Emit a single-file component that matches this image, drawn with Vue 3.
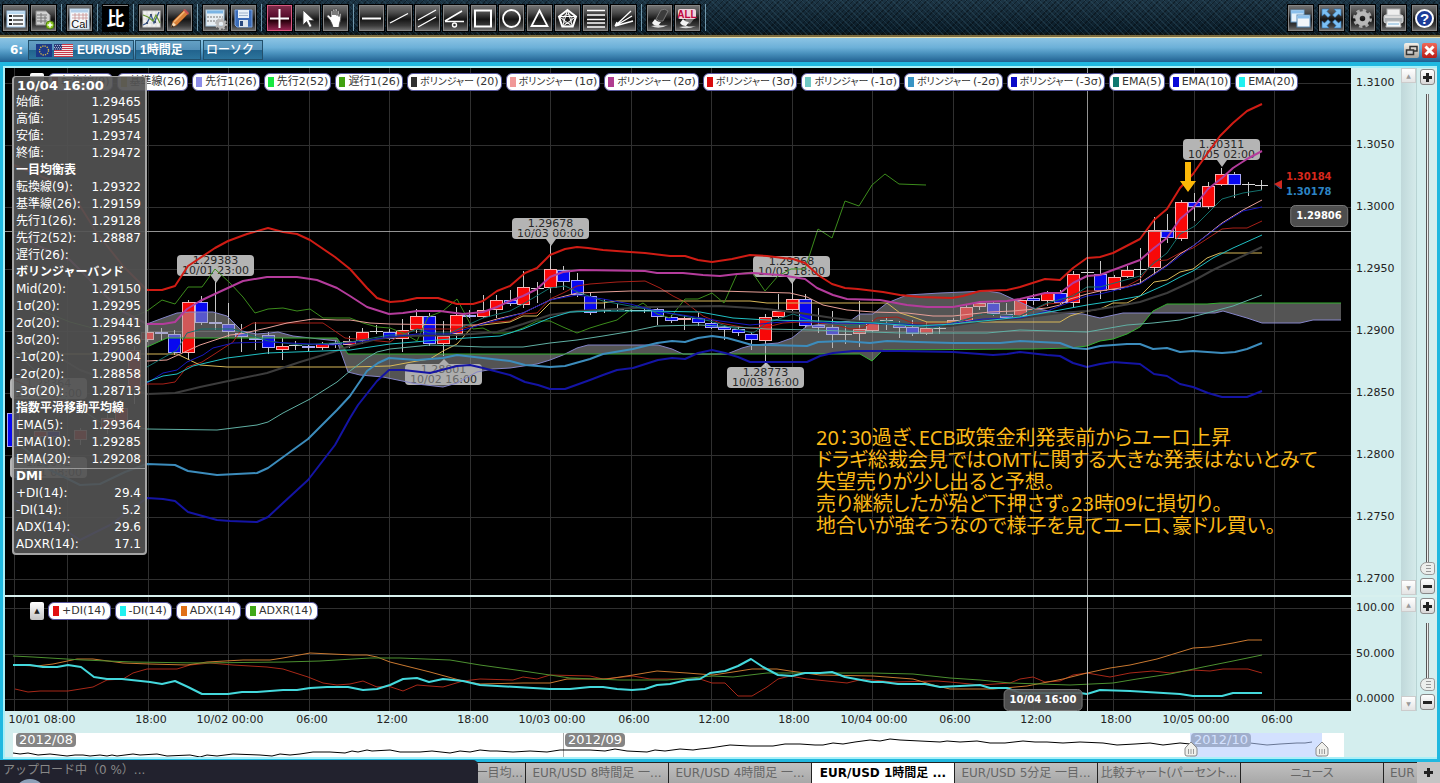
<script setup>
const PLOT = { x: 5, y: 68, w: 1346, h: 527 }
const SUB = { x: 5, y: 597, w: 1346, h: 114 }
const NAV = { x: 13, y: 733, w: 1331, h: 24 }

const pct = (v, start, size) => ((v - start) / size) * 100 + '%'
const at = (box, x, y) => ({ left: pct(x, box.x, box.w), top: pct(y, box.y, box.h) })

const ink = '#fff'
const toolGroups = [
  [
    { name: 'チャート一覧', art: '<rect x="5" y="6" width="18" height="16" fill="#f4f8fb" stroke="#9cc4e8"/><path d="M7 11h3M7 15h3M7 19h3" stroke="#222" stroke-width="2"/><path d="M11 11h10M11 15h10M11 19h10" stroke="#444" stroke-width="1.600"/><path d="M5 8h18" stroke="#b8d8f0" stroke-width="2"/>' },
    { name: 'チャート追加', art: '<path d="M6 6h10l4 4v10H6z" fill="#d0d0d0" stroke="#888"/><path d="M7 10h10M7 13h10M7 16h10M11 8v10M15 11v8" stroke="#777"/><circle cx="20" cy="20" r="4" fill="#8fc820" stroke="#4e8010"/><path d="M20 17.500v5M17.500 20h5" stroke="#fff" stroke-width="1.500"/>' }
  ],
  [{ name: 'カレンダー', art: '<rect x="4" y="4" width="19" height="20" fill="#f6f8fa" stroke="#b8d4ea"/><path d="M5 6h17" stroke="#b4d0ea" stroke-width="3"/><path d="M6 10h16M6 13h16M9 8v7M13 8v7M17 8v7M20 8v7" stroke="#c89090" stroke-width=".8"/><text x="13.500" y="23" text-anchor="middle" font-family="Liberation Sans, sans-serif" font-size="11" fill="#111">Cal</text>' }],
  [{ name: '比較', kind: 'compare', art: '<rect x="1" y="1" width="25" height="25" fill="#000"/><text x="13.500" y="20" text-anchor="middle" font-family="Noto Sans CJK JP, sans-serif" font-size="18" font-weight="700" fill="#fff">比</text>' }],
  [
    { name: 'テクニカル', art: '<rect x="5" y="6" width="17" height="16" fill="#f2f2f0" stroke="#d8d8d8"/><path d="M5 10h17M5 14h17M5 18h17M9 6v16M14 6v16M18 6v16" stroke="#ccc" stroke-width=".6"/><path d="M5 20l4-2 4-8 3 8 5-11" stroke="#385890" fill="none" stroke-width="1.300"/><path d="M5 10l5 2 5 4 3-6 4 8" stroke="#6a9a30" fill="none" stroke-width="1.200"/><path d="M8 17h2v2H8zM12 9h2v2h-2zM16 16h2v2h-2z" fill="#405070"/>' },
    { name: '描画', art: '<path d="M5 23l2-7L18 5l4 4L11 20z" fill="#d88038" stroke="#7a4018" stroke-width=".8"/><path d="M8 17L19 6" stroke="#f4b878" stroke-width="1.500"/><path d="M17 5l2-1 4 4-1 2z" fill="#c85050"/><path d="M5 23l2-6 3 3z" fill="#f4dcb8"/><path d="M5 23l1-3 2 2z" fill="#222"/>' }
  ],
  [
    { name: '表示設定', art: '<rect x="4" y="5" width="18" height="16" fill="#e8eef2" stroke="#a8c8e0"/><path d="M5 7h16" stroke="#7ab4e4" stroke-width="3"/><path d="M5 12h16M5 16h16" stroke="#777" stroke-width="1" stroke-dasharray="2 1"/><circle cx="19" cy="19" r="3.500" fill="none" stroke="#b8b8b8" stroke-width="2.500"/><circle cx="19" cy="19" r="5" fill="none" stroke="#b8b8b8" stroke-width="2" stroke-dasharray="2 1.900"/>' },
    { name: '保存', art: '<path d="M5 5h17v17H7l-2-2z" fill="#3c6cb8" stroke="#78a0dc"/><rect x="8" y="5" width="11" height="8" fill="#e8f0f8"/><path d="M9 8h9M9 10.500h9" stroke="#a0b4cc"/><rect x="9" y="15" width="9" height="7" fill="#dce4ee"/><rect x="10" y="16" width="3" height="5" fill="#284880"/>' }
  ],
  [
    { name: '十字線', kind: 'active', art: '<path d="M13.500 4v19M4 13.500h19" stroke="#fff" stroke-width="2"/>' },
    { name: '選択', art: '<path d="M9 5v15l3.500-3.500 3 6 2.500-1.200-3-5.800h5z" fill="#fff" stroke="#444" stroke-width=".8"/>' },
    { name: '移動', art: '<path d="M8 15L5 11.500q-.5-2 1.500-1.500L9 12V6q1-1.600 2 0v4V4.500q1-1.500 2 0V10 4q1-1.500 2 0v6.500V6q1.100-1.500 2 0v5.500V9q1.500-1.200 2 .5 0 6-1.500 9l-.5 4H11q-.5-3-3-7.500z" fill="#fff" stroke="#444" stroke-width=".9"/>' }
  ],
  [
    { name: '水平線', art: `<path d="M4 13.500h19" stroke="${ink}" stroke-width="2"/>` },
    { name: 'トレンドライン', art: `<path d="M4 18L22 8.500" stroke="${ink}" stroke-width="1.400"/>` },
    { name: '平行線', art: `<path d="M4 15L22 5M4 22l18-10" stroke="${ink}" stroke-width="1.400"/>` },
    { name: '角度線', art: `<path d="M3 16L20 6M3 16.500h19" stroke="${ink}" stroke-width="1.600"/><circle cx="12.500" cy="20" r="2" fill="none" stroke="${ink}" stroke-width="1.400"/>` },
    { name: '四角形', art: `<rect x="5" y="5.500" width="16" height="16" fill="none" stroke="${ink}" stroke-width="2"/>` },
    { name: '円', art: `<circle cx="13.500" cy="13.500" r="8.500" fill="none" stroke="${ink}" stroke-width="1.800"/>` },
    { name: '三角形', art: `<path d="M13.500 5.500L21.500 21h-16z" fill="none" stroke="${ink}" stroke-width="1.800"/>` },
    { name: '五角形', art: `<path d="M13.500 5l8.500 6.500-3.300 10H8.300L5 11.500z" fill="none" stroke="${ink}" stroke-width="2"/><path d="M13.500 5L8.500 21.500 22 11.500H5l13.500 10z" fill="none" stroke="${ink}" stroke-width="1"/><circle cx="13.500" cy="14" r="4.500" fill="none" stroke="${ink}" stroke-width=".8"/>` },
    { name: 'フィボナッチ', art: `<path d="M5 5.500h18M5 10h18M5 14.500h18M5 18h18M5 22h18" stroke="${ink}" stroke-width="1.300"/>` },
    { name: 'ファンライン', art: `<path d="M5 21L21 6M5 21l17-10M5 21l18-5M5 21l2-4M5 21l4-1" stroke="${ink}" stroke-width="1.300"/>` }
  ],
  [
    { name: '消去', art: '<path d="M10 14l5-9q4-2 7 1l-5 10q-4 1-7-2z" fill="#3c3c3c" stroke="#888" stroke-width=".8"/><path d="M6 18l3-4q2 3 6 3l-3 4q-4 0-6-3z" fill="#f4f4f4"/><path d="M5 21q8 4 17-1-6 1-9 0z" fill="#ddd"/>' },
    { name: 'すべて消去', art: '<path d="M9 16l5-3 6 1-4 5q-4 1-7-3z" fill="#777"/><path d="M6 18l3-4q2 3 6 3l-3 4q-4 0-6-3z" fill="#f4f4f4"/><path d="M5 22q8 3 17-1-6 1-9 0z" fill="#ddd"/><rect x="4" y="4" width="18" height="10" rx="2" fill="#f0d4dc"/><text x="13" y="13" text-anchor="middle" font-family="Liberation Sans, sans-serif" font-size="10" font-weight="700" fill="#c00840">ALL</text>' }
  ]
]
const rightTools = [
  { name: 'ウィンドウ整列', art: '<rect x="4" y="5" width="13" height="12" fill="#e8f2fa" stroke="#6a9cc8"/><path d="M4 7h13" stroke="#8cc0ec" stroke-width="3"/><rect x="10" y="10" width="13" height="12" fill="#f2f6fa" stroke="#5a8cb8"/><path d="M10.500 12h12" stroke="#8cc0ec" stroke-width="3"/>' },
  { name: '最大化', art: '<path d="M4 4h7L9 6.500l3.500 3.500-2.500 2.500L6.500 9 4 11zM23 4h-7l2 2.500-3.500 3.500 2.500 2.500L20.500 9l2.500 2zM4 23h7l-2-2.500 3.500-3.500-2.500-2.500L6.500 18 4 16zM23 23h-7l2-2.500-3.500-3.500 2.500-2.500 3.500 3.500 2.500-2z" fill="#7cc0f4" stroke="#2c6ca8" stroke-width=".6"/>' },
  { name: '設定', art: '<circle cx="13.500" cy="13.500" r="8" fill="none" stroke="#aaa" stroke-width="3" stroke-dasharray="3.300 2.983"/><circle cx="13.500" cy="13.500" r="5" fill="none" stroke="#b8b8b8" stroke-width="4.500"/>' },
  { name: '印刷', art: '<rect x="7" y="4" width="13" height="7" fill="#eee" stroke="#aaa"/><rect x="4" y="10" width="19" height="8" rx="2" fill="#aab0b4" stroke="#e0e0e0"/><path d="M5 12h17" stroke="#dcdcdc" stroke-width="2"/><path d="M7 16h13l1 6H6z" fill="#f4f8fa" stroke="#bbb"/><path d="M8 19h11" stroke="#78b0d8"/>' },
  { name: 'ヘルプ', art: '<circle cx="13.500" cy="13.500" r="8.500" fill="#1c3c98" stroke="#fff" stroke-width="2"/><text x="13.500" y="19" text-anchor="middle" font-family="Liberation Sans, sans-serif" font-size="15" font-weight="700" fill="#fff">?</text>' }
]

const legend = [
  { color: '#d81818', text: '転換線(9)' },
  { color: '#d8b848', text: '基準線(26)' },
  { color: '#8c8ce8', text: '先行1(26)' },
  { color: '#18e840', text: '先行2(52)' },
  { color: '#40a010', text: '遅行1(26)' },
  { color: '#303030', kana: 'ボリンジャー', text: '(20)' },
  { color: '#f09898', kana: 'ボリンジャー', text: '(1σ)' },
  { color: '#b03c90', kana: 'ボリンジャー', text: '(2σ)' },
  { color: '#d80c0c', kana: 'ボリンジャー', text: '(3σ)' },
  { color: '#70c8c4', kana: 'ボリンジャー', text: '(-1σ)' },
  { color: '#3894c4', kana: 'ボリンジャー', text: '(-2σ)' },
  { color: '#0808c8', kana: 'ボリンジャー', text: '(-3σ)' },
  { color: '#107870', text: 'EMA(5)' },
  { color: '#0808d8', text: 'EMA(10)' },
  { color: '#20f0f0', text: 'EMA(20)' }
]
const subLegend = [
  { color: '#e01010', text: '+DI(14)' },
  { color: '#20f0f0', text: '-DI(14)' },
  { color: '#e07018', text: 'ADX(14)' },
  { color: '#40a818', text: 'ADXR(14)' }
]

const quotes = [
  ['始値:', '1.29465'], ['高値:', '1.29545'], ['安値:', '1.29374'], ['終値:', '1.29472'],
  ['一目均衡表'],
  ['転換線(9):', '1.29322'], ['基準線(26):', '1.29159'], ['先行1(26):', '1.29128'], ['先行2(52):', '1.28887'], ['遅行(26):', ''],
  ['ボリンジャーバンド'],
  ['Mid(20):', '1.29150'], ['1σ(20):', '1.29295'], ['2σ(20):', '1.29441'], ['3σ(20):', '1.29586'],
  ['-1σ(20):', '1.29004'], ['-2σ(20):', '1.28858'], ['-3σ(20):', '1.28713'],
  ['指数平滑移動平均線'],
  ['EMA(5):', '1.29364'], ['EMA(10):', '1.29285'], ['EMA(20):', '1.29208'],
  ['DMI'],
  ['+DI(14):', '29.4'], ['-DI(14):', '5.2'], ['ADX(14):', '29.6'], ['ADXR(14):', '17.1']
]

const priceTicks = ['1.3100', '1.3050', '1.3000', '1.2950', '1.2900', '1.2850', '1.2800', '1.2750', '1.2700']
  .map((label, i) => ({ label, y: 83 + i * 62 }))
const dmiTicks = [{ label: '100.00', y: 608 }, { label: '50.000', y: 654 }, { label: '0.0000', y: 699 }]
const timeTicks = [
  { label: '10/01 08:00', x: 42, line: 14 }, { label: '', x: 67, line: 67 },
  { label: '18:00', x: 151, line: 148 }, { label: '10/02 00:00', x: 230, line: 228 },
  { label: '06:00', x: 312, line: 309 }, { label: '12:00', x: 392, line: 389 },
  { label: '18:00', x: 473, line: 470 }, { label: '10/03 00:00', x: 552, line: 550 },
  { label: '06:00', x: 634, line: 631 }, { label: '12:00', x: 714, line: 711 },
  { label: '18:00', x: 794, line: 792 }, { label: '10/04 00:00', x: 874, line: 872 },
  { label: '06:00', x: 955, line: 953 }, { label: '12:00', x: 1036, line: 1033 },
  { label: '18:00', x: 1116, line: 1113 }, { label: '10/05 00:00', x: 1196, line: 1194 },
  { label: '06:00', x: 1277, line: 1274 }
]

const markers = [
  { price: '1.28364', time: '10/01 16:00', x: 48, y: 388, dir: '' },
  { price: '1.28042', time: '10/01 08:00', x: 48, y: 467, dir: '' },
  { price: '1.29383', time: '10/01 23:00', x: 215, y: 265, dir: 'down' },
  { price: '1.28801', time: '10/02 16:00', x: 443, y: 374, dir: 'up' },
  { price: '1.29678', time: '10/03 00:00', x: 550, y: 228, dir: 'down' },
  { price: '1.29368', time: '10/03 18:00', x: 791, y: 266, dir: 'down' },
  { price: '1.28773', time: '10/03 16:00', x: 765, y: 377, dir: 'up' },
  { price: '1.30311', time: '10/05 02:00', x: 1221, y: 149, dir: 'down' }
]

const spanA = '147,324 163,318 177,313 190,312 213,312 227,316 242,331 257,334 270,333 278,332 293,336 337,341 348,372 360,375 383,377 417,384 443,387 457,383 477,372 493,369 510,368 537,364 550,360 563,355 577,348 588,345 658,345 672,349 683,354 727,354 742,348 753,345 778,343 792,338 807,326 833,323 850,321 860,314 873,314 887,303 907,295 940,293 987,291 1000,293 1013,299 1033,308 1060,313 1083,314 1100,318 1123,313 1215,313 1223,311 1247,318 1262,323 1300,323 1313,320 1341,320'
const spanB = '147,347 167,338 337,338 348,354 860,354 872,361 883,350 1033,349 1070,348 1087,346 1100,341 1113,339 1127,334 1140,327 1153,311 1167,304 1207,304 1220,303 1341,303'
const cloud = spanA + ' ' + spanB.split(' ').reverse().join(' ')

const lines = [
  { c: '#a82018', w: 1, p: '14,380 60,400 100,405 147,384 163,384 175,382 187,367 202,362 213,355 233,342 242,329 253,323 323,323 345,338 390,342 403,333 417,329 460,329 483,323 510,321 523,314 537,313 550,299 563,293 577,286 590,284 617,282 645,281 660,288 673,296 685,302 703,316 720,323 747,328 767,327 783,323 800,322 833,324 850,329 863,328 877,318 897,317 913,323 957,323 983,314 1020,316 1047,304 1060,303 1073,294 1087,291 1100,291 1127,286 1140,279 1154,261 1167,260 1180,253 1193,248 1222,229 1233,228 1247,228 1262,221' },
  { c: '#d8b858', w: 1, p: '14,354 177,354 200,365 227,367 350,367 390,366 417,361 430,359 443,351 457,344 473,326 510,322 523,316 537,316 550,303 603,303 617,301 750,301 767,303 887,303 900,313 913,317 927,322 1060,322 1070,316 1083,312 1100,309 1113,303 1127,303 1140,296 1154,282 1167,280 1180,272 1193,269 1207,258 1220,253 1262,253' },
  { c: '#3c8c1c', w: 1, p: '14,340 40,310 70,322 100,330 130,318 147,311 162,300 175,304 188,287 202,287 215,269 230,283 243,297 255,313 268,309 283,308 297,311 310,309 323,318 350,318 363,323 377,327 390,328 403,333 417,341 428,317 443,311 457,299 473,329 483,328 493,333 510,333 523,328 537,321 550,321 563,327 577,333 590,328 603,324 617,320 630,310 643,303 657,314 670,318 685,299 698,299 712,293 724,303 737,274 752,272 765,291 778,276 791,269 805,269 818,229 832,238 845,201 859,206 872,185 885,174 899,184 926,185' },
  { c: '#3c3c3c', w: 2, p: '14,330 80,370 147,394 175,393 200,387 233,380 267,373 300,362 333,352 350,346 377,339 403,336 457,335 497,332 523,324 550,315 577,311 617,309 650,307 720,306 767,309 800,313 833,318 873,323 907,325 950,326 983,321 1020,318 1060,313 1087,311 1113,307 1140,302 1167,293 1193,281 1213,270 1262,247' },
  { c: '#e8a098', w: 1, p: '147,361 167,360 178,355 200,345 230,335 240,334 267,328 287,323 313,319 337,320 350,320 370,323 390,324 457,325 477,325 497,319 523,313 550,300 577,293 603,292 630,291 720,291 790,293 807,297 823,305 847,310 873,312 907,313 933,316 953,316 990,312 1013,311 1047,308 1060,305 1070,299 1087,294 1100,291 1127,287 1140,283 1167,265 1180,254 1193,246 1222,223 1243,210 1262,200' },
  { c: '#b43c9c', w: 2, p: '14,235 70,260 120,310 147,324 163,324 175,322 187,309 200,301 217,293 243,281 267,277 297,277 317,280 337,288 350,296 367,307 389,314 403,313 417,311 440,311 463,314 483,312 497,307 510,301 523,296 537,289 550,277 563,272 580,270 645,271 657,273 683,273 703,275 720,276 737,274 753,273 780,275 805,279 817,288 833,295 847,299 880,300 907,305 927,307 953,307 980,302 1007,301 1020,299 1045,293 1060,293 1073,283 1087,276 1100,275 1113,270 1140,260 1154,248 1167,238 1180,219 1193,208 1208,189 1222,178 1233,168 1247,159 1262,151' },
  { c: '#d01c14', w: 2, p: '14,165 50,180 67,189 80,206 97,233 123,266 147,290 162,290 175,286 188,266 215,248 228,241 247,234 268,228 283,232 297,234 310,240 335,257 350,269 367,288 377,298 390,302 403,301 417,298 438,298 457,304 473,304 483,301 497,291 510,286 525,273 537,268 550,255 565,249 577,247 588,248 603,250 630,252 645,253 670,256 685,256 698,260 712,262 732,259 750,255 767,256 783,258 793,259 805,263 818,275 832,284 845,288 858,289 883,292 900,295 920,297 952,298 963,296 980,291 1007,290 1020,287 1045,279 1060,280 1073,268 1087,258 1100,257 1113,253 1140,239 1154,220 1167,209 1180,188 1193,174 1207,154 1220,136 1233,123 1247,111 1262,104' },
  { c: '#60b0a4', w: 1, p: '14,350 60,395 100,422 147,429 217,430 257,425 268,422 283,413 310,399 337,382 350,371 367,358 377,352 390,349 430,345 483,347 523,347 550,343 577,340 603,336 633,331 657,326 700,325 767,329 813,330 900,333 987,333 1020,330 1087,332 1127,325 1153,323 1180,320 1207,313 1233,306 1262,295' },
  { c: '#3c8cbc', w: 2, p: '14,440 50,470 80,485 100,484 125,472 147,464 175,465 188,471 217,475 257,473 268,468 308,439 337,410 350,396 367,371 378,363 389,358 417,360 443,358 457,355 483,358 510,361 525,365 550,367 565,366 590,359 603,354 633,349 657,343 672,341 685,342 698,338 712,336 727,338 738,341 752,345 767,345 807,346 818,342 843,341 870,343 887,341 917,342 953,343 1000,343 1020,341 1060,343 1073,348 1087,349 1100,346 1127,344 1140,344 1153,349 1167,348 1180,352 1193,351 1222,353 1235,352 1247,349 1262,343' },
  { c: '#1414a4', w: 2, p: '14,500 50,520 80,540 110,525 147,498 163,499 175,501 188,512 217,520 230,521 257,522 268,517 283,503 308,480 335,445 350,418 358,405 377,381 389,370 403,370 430,373 457,366 470,365 483,368 510,375 525,382 538,385 550,389 565,389 590,380 603,375 617,370 633,368 658,360 672,358 685,359 698,353 712,350 725,353 738,357 750,362 767,362 807,362 820,356 833,353 853,351 900,351 953,352 993,355 1007,354 1020,352 1047,355 1060,356 1073,363 1087,367 1100,364 1113,362 1140,364 1154,374 1167,376 1180,384 1193,387 1208,393 1222,397 1247,397 1262,391' },
  { c: '#14706c', w: 1, p: '147,367 177,350 187,333 202,329 233,329 268,341 300,345 350,342 390,335 403,335 417,329 430,333 450,333 483,318 510,311 523,304 550,288 565,286 580,293 603,301 630,306 657,311 710,321 733,328 753,333 767,323 793,314 813,321 847,326 887,321 933,328 967,319 983,314 1020,316 1047,303 1073,296 1087,287 1100,287 1140,276 1154,263 1167,253 1180,234 1195,226 1222,199 1243,193 1262,190' },
  { c: '#1818c0', w: 1, p: '147,383 163,373 177,370 187,362 203,355 213,348 233,343 268,342 333,345 350,343 390,337 417,334 450,334 483,324 523,313 550,300 577,295 603,299 630,304 657,311 720,321 750,325 793,321 833,323 900,324 933,326 983,319 1020,318 1047,311 1073,301 1087,296 1100,294 1140,284 1167,266 1193,246 1222,224 1243,211 1262,207' },
  { c: '#20c0c4', w: 1, p: '147,382 163,376 177,374 193,366 227,358 267,353 350,350 390,344 450,339 500,336 523,329 550,318 570,312 603,311 650,311 700,312 733,318 767,320 820,321 873,323 917,326 953,324 993,320 1020,317 1060,310 1087,305 1113,301 1140,296 1167,284 1180,277 1193,271 1213,258 1233,248 1262,235' }
]

const subLines = [
  { c: '#a82818', w: 1, p: '15,689 28,692 40,691 68,691 93,687 107,680 123,679 133,673 147,669 177,669 190,665 210,663 233,665 267,667 283,669 308,677 323,683 337,685 350,684 363,681 377,687 388,686 403,691 417,685 443,687 463,681 480,679 513,680 523,677 537,679 550,675 590,676 603,679 633,676 650,679 700,679 712,683 725,683 738,696 752,696 767,687 778,679 790,676 807,679 847,683 863,679 893,682 937,681 950,682 980,685 1010,683 1020,679 1033,677 1045,682 1060,681 1073,675 1087,673 1110,677 1130,673 1153,671 1170,673 1193,670 1210,671 1223,669 1248,669 1262,673' },
  { c: '#c87830', w: 1, p: '13,665 37,666 53,664 77,659 93,659 123,663 150,664 187,665 207,662 243,660 270,660 283,658 310,653 353,655 367,655 377,657 390,662 430,672 463,681 480,684 523,683 550,683 567,679 607,679 633,675 657,671 687,673 713,675 733,672 752,669 777,669 790,671 820,675 873,676 913,679 937,686 950,689 993,689 1027,686 1063,679 1087,673 1110,668 1130,665 1157,659 1193,648 1210,647 1233,643 1248,640 1262,640' },
  { c: '#4c9030', w: 1, p: '13,656 33,657 83,660 133,662 200,663 283,662 320,661 370,658 400,658 450,660 480,665 523,671 570,678 620,680 667,680 713,676 733,677 767,673 813,673 873,673 913,674 950,678 980,680 1010,683 1070,685 1113,683 1137,679 1170,674 1203,667 1233,661 1262,655' },
  { c: '#44d8dc', w: 2, p: '13,665 30,665 43,667 57,667 68,665 81,667 94,677 107,679 122,679 150,682 162,684 175,681 188,687 202,694 228,694 242,692 257,692 283,690 297,690 310,688 327,687 348,687 363,690 377,689 390,685 403,679 417,678 429,682 443,679 463,681 480,685 550,689 570,689 590,687 603,687 617,689 632,690 645,689 657,685 670,684 687,680 700,679 710,673 725,671 738,666 751,659 763,667 778,675 792,676 805,673 820,673 832,672 845,677 872,682 883,682 898,684 925,684 940,687 960,686 980,685 990,688 1007,688 1020,693 1080,693 1087,694 1100,690 1130,691 1180,694 1193,696 1222,696 1233,693 1262,693' }
]

/* hour offset from 10/03 00:00, body top, body bottom, wick top, wick bottom, colour */
const candles = [
  [-40, 413, 447, 411, 449, 'b'], [-38, 431, 437, 428, 440, 'r'], [-37, 431, 437, 428, 440, 'b'], [-35, 430, 440, 428, 445, 'r'], [-33, 418, 428, 414, 434, 'r'], [-32, 408, 422, 400, 424, 'r'], [-31, 350, 390, 346, 404, 'r'],
  [-30, 332, 340, 325, 342, 'r'], [-29, 332, 334, 328, 340, 'b'], [-28, 334, 353, 330, 355, 'b'], [-27, 302, 353, 300, 360, 'r'],
  [-26, 302, 323, 296, 325, 'b'], [-25, 322, 324, 282, 330, 'b'], [-24, 324, 332, 303, 337, 'b'], [-23, 333, 337, 324, 352, 'b'],
  [-22, 338, 340, 322, 350, 'b'], [-21, 335, 348, 332, 354, 'b'], [-20, 346, 350, 338, 360, 'r'], [-19, 345, 346, 341, 350, 'w'],
  [-18, 346, 348, 344, 351, 'b'], [-17, 344, 348, 342, 350, 'r'], [-16, 343, 345, 340, 348, 'b'], [-15, 341, 345, 336, 348, 'r'],
  [-14, 332, 341, 328, 344, 'r'], [-13, 331, 332, 325, 334, 'w'], [-12, 332, 339, 329, 340, 'b'], [-11, 330, 339, 319, 352, 'r'],
  [-10, 316, 330, 309, 333, 'r'], [-9, 316, 344, 313, 346, 'b'], [-8, 336, 344, 321, 356, 'r'], [-7, 315, 334, 307, 340, 'r'],
  [-6, 315, 317, 310, 318, 'b'], [-5, 310, 317, 295, 318, 'r'], [-4, 300, 310, 295, 318, 'r'], [-3, 300, 304, 290, 306, 'b'],
  [-2, 287, 305, 271, 308, 'r'], [-1, 288, 289, 282, 303, 'w'], [0, 269, 288, 245, 293, 'r'], [1, 270, 282, 266, 290, 'b'],
  [2, 280, 295, 273, 297, 'b'], [3, 296, 313, 292, 315, 'b'], [4, 310, 312, 299, 313, 'w'], [5, 309, 310, 304, 311, 'w'],
  [6, 310, 311, 307, 312, 'w'], [7, 310, 311, 308, 313, 'w'], [8, 309, 317, 308, 325, 'b'], [9, 317, 321, 315, 323, 'b'],
  [10, 318, 320, 315, 330, 'r'], [11, 318, 323, 313, 326, 'b'], [12, 323, 328, 320, 329, 'b'], [13, 327, 330, 325, 340, 'b'],
  [14, 329, 333, 326, 336, 'b'], [15, 334, 340, 332, 350, 'b'], [16, 317, 341, 314, 366, 'r'], [17, 311, 317, 294, 318, 'r'],
  [18, 299, 310, 282, 312, 'r'], [19, 299, 326, 294, 328, 'b'], [20, 325, 328, 308, 333, 'b'], [21, 327, 335, 311, 348, 'b'],
  [22, 334, 335, 326, 344, 'w'], [23, 329, 334, 301, 347, 'r'], [24, 323, 331, 320, 332, 'r'], [25, 320, 321, 317, 330, 'w'],
  [26, 325, 328, 321, 338, 'b'], [27, 327, 334, 320, 336, 'b'], [28, 328, 334, 322, 335, 'r'], [29, 328, 329, 325, 334, 'w'],
  [30, 320, 324, 318, 326, 'r'], [31, 307, 321, 305, 323, 'r'], [32, 303, 307, 301, 310, 'r'], [33, 303, 314, 302, 316, 'b'],
  [34, 314, 318, 303, 319, 'b'], [35, 300, 316, 298, 318, 'r'], [36, 298, 301, 294, 305, 'b'], [37, 293, 301, 291, 306, 'r'],
  [38, 293, 303, 290, 304, 'b'], [39, 274, 303, 271, 307, 'r'], [40, 272, 273, 260, 280, 'w'], [41, 274, 291, 261, 299, 'b'],
  [42, 277, 290, 275, 291, 'r'], [43, 270, 277, 266, 278, 'r'], [44, 269, 270, 248, 284, 'w'], [45, 230, 268, 217, 275, 'r'],
  [46, 230, 238, 214, 243, 'b'], [47, 202, 239, 200, 241, 'r'], [48, 202, 207, 193, 221, 'b'], [49, 186, 207, 182, 209, 'r'],
  [50, 174, 185, 168, 186, 'r'], [51, 174, 185, 172, 198, 'b'], [52, 184, 185, 182, 196, 'w'], [53, 185, 186, 180, 190, 'w']
].map(([n, top, bottom, high, low, tone]) => ({ x: Math.round(550 + 13.42 * n), top, bottom, high, low, tone }))
const tones = { r: '#f80808', b: '#0808f0' }
const edges = { r: '#f8b0b0', b: '#a8a8f8' }

const history = '13,753 20,754 28,753 38,755 50,754 67,756 75,755 83,755 90,756 100,755 107,756 112,755 117,756 133,754 140,755 157,754 167,756 190,755 200,757 207,755 217,756 233,754 260,755 272,756 280,754 290,755 300,754 313,752 330,752 345,753 352,751 358,752 367,750 372,751 390,750 400,752 420,752 432,751 450,753 460,751 470,752 480,750 490,751 497,751 513,752 530,751 547,752 560,750 590,750 605,751 615,749 627,751 647,752 655,750 665,751 680,749 693,750 700,749 710,748 723,746 730,745 750,746 773,746 785,744 800,744 815,745 823,745 833,743 843,744 855,742 870,740 880,741 890,739 900,740 920,741 940,742 947,741 960,742 977,741 990,743 1005,743 1023,741 1035,742 1047,742 1063,743 1080,742 1103,743 1117,745 1135,744 1150,743 1163,745 1180,743 1190,744 1215,743 1230,744 1250,743 1267,745 1280,744 1297,743 1305,743 1312,742'

const navLabels = [{ label: '2012/08', x: 16 }, { label: '2012/09', x: 565 }, { label: '2012/10', x: 1191 }]

const tabs = [
  { label: '一目均...', tail: true },
  { label: 'EUR/USD 8時間足 一...' },
  { label: 'EUR/USD 4時間足 一...' },
  { label: 'EUR/USD 1時間足 ...', current: true },
  { label: 'EUR/USD 5分足 一目...' },
  { label: '比較チャート(パーセント...' },
  { label: 'ニュース' },
  { label: 'EUR', tail: false }
]
</script>

<template>
  <div class="app">
    <header class="toolbar">
      <div v-for="(group, g) in toolGroups" :key="g" class="group">
        <button v-for="tool in group" :key="tool.name" type="button" class="tool" :class="tool.kind" :aria-label="tool.name">
          <svg viewBox="0 0 27 27" v-html="tool.art"></svg>
        </button>
      </div>
      <div class="group right">
        <button v-for="tool in rightTools" :key="tool.name" type="button" class="tool" :aria-label="tool.name">
          <svg viewBox="0 0 27 27" v-html="tool.art"></svg>
        </button>
      </div>
    </header>

    <div class="titlebar">
      <span class="number">6:</span>
      <button type="button" class="crumb pair">
        <svg class="flag" viewBox="0 0 16 13">
          <rect width="16" height="13" fill="#1c3a88" />
          <circle cx="8" cy="6.500" r="4.500" fill="none" stroke="#c8b050" stroke-width="1.400" stroke-dasharray="1.300 1.056" />
        </svg>
        <svg class="flag wide" viewBox="0 0 19 13">
          <rect width="19" height="13" fill="#f4e8e8" />
          <path d="M0 .5h19M0 2.500h19M0 4.500h19M0 6.500h19M0 8.500h19M0 10.500h19M0 12.500h19" stroke="#c83848" />
          <rect width="8" height="6" fill="#2c3c78" />
          <path d="M1 1.500h7M0 3.500h8M1 5h7" stroke="#a8b0d0" stroke-dasharray="1 1" />
        </svg>
        EUR/USD
      </button>
      <button type="button" class="crumb span">1時間足</button>
      <button type="button" class="crumb style">ローソク</button>
      <div class="window-buttons">
        <button type="button" aria-label="元に戻す">
          <svg viewBox="0 0 15 15"><rect x="6" y="3.500" width="7" height="4.500" fill="none" stroke="#333" stroke-width="1.500" /><rect x="2.500" y="7" width="7" height="4.500" fill="#ccc" stroke="#333" stroke-width="1.500" /></svg>
        </button>
        <button type="button" class="close" aria-label="閉じる">
          <svg viewBox="0 0 15 15"><path d="M3.500 3.500l8 8M11.500 3.500l-8 8" stroke="#fff" stroke-width="3" /></svg>
        </button>
      </div>
    </div>

    <main class="frame">
      <div class="chart">
        <section class="plot">
          <svg class="layer" viewBox="5 68 1346 527" preserveAspectRatio="none" shape-rendering="crispEdges">
            <path v-for="t in priceTicks" :key="t.y" :d="`M5 ${t.y + 0.5}H1351`" class="grid" />
            <path v-for="t in timeTicks" :key="t.line" :d="`M${t.line + 0.5} 68V595`" class="grid" />
          </svg>
          <div v-for="m in markers" :key="m.time + m.x" class="marker" :class="m.dir" :style="at(PLOT, m.x, m.y)">{{ m.price }}<br />{{ m.time }}</div>
          <svg class="layer" viewBox="5 68 1346 527" preserveAspectRatio="none">
            <g shape-rendering="crispEdges">
              <template v-for="c in candles" :key="c.x">
                <path :d="`M${c.x + 0.5} ${c.high}V${c.low}`" stroke="#c8c8c8" />
                <path v-if="c.tone === 'w'" :d="`M${c.x - 6} ${c.top + 0.5}h13`" stroke="#d8d8d8" />
                <rect v-else :x="c.x - 5.5" :y="c.top + 0.5" width="12" :height="Math.max(c.bottom - c.top - 1, 1)" :fill="tones[c.tone]" :stroke="edges[c.tone]" />
              </template>
            </g>
            <polygon :points="cloud" fill="#a8a8a8" fill-opacity=".5" />
            <polyline :points="spanA" class="curve" stroke="#8484c8" />
            <polyline :points="spanB" class="curve" stroke="#34b030" />
            <polyline v-for="l in lines" :key="l.c" :points="l.p" class="curve" :stroke="l.c" :stroke-width="l.w" />
            <path d="M5 231.500H1351M1087.500 68V595" stroke="#b8b8b8" stroke-opacity=".8" shape-rendering="crispEdges" />
            <path d="M1185 162h6v19h5l-8 11-8-11h5z" fill="#fcb808" />
            <path d="M1274 184l8-4v9z" fill="#d02820" />
            <path d="M1274 184l8 5h-2z" fill="#3070b0" />
          </svg>

          <div class="legend">
            <button type="button" class="fold" aria-label="凡例を閉じる">▲</button>
            <button v-for="item in legend" :key="item.color + item.text" type="button" class="pill">
              <i :style="{ background: item.color }"></i><span v-if="item.kana" class="kana">{{ item.kana }}</span>{{ item.text }}
            </button>
          </div>

          <p class="note" :style="at(PLOT, 816, 427)">20：30過ぎ、ECB政策金利発表前からユーロ上昇<br />ドラギ総裁会見ではOMTに関する大きな発表はないとみて<br />失望売りが少し出ると予想。<br />売り継続したが殆ど下押さず。23時09に損切り。<br />地合いが強そうなので様子を見てユーロ、豪ドル買い。</p>
          <div class="rates" :style="at(PLOT, 1286, 169)"><span class="ask">1.30184</span><span class="bid">1.30178</span></div>
          <div class="cursor-tag" :style="at(PLOT, 1319, 216)">1.29806</div>

          <dl class="panel">
            <div class="row heading time"><dt>10/04 16:00</dt></div>
            <div v-for="q in quotes" :key="q[0]" class="row" :class="{ heading: q.length === 1, ruled: q[0] === 'DMI' }">
              <dt>{{ q[0] }}</dt><dd v-if="q.length > 1">{{ q[1] }}</dd>
            </div>
          </dl>
        </section>
        <div class="axis"><span v-for="t in priceTicks" :key="t.label" :style="{ top: pct(t.y, PLOT.y, PLOT.h) }">{{ t.label }}</span></div>
        <div class="scroller"><button type="button" aria-label="上へ">▲</button><button type="button" aria-label="下へ">▼</button></div>
        <div class="zoomer">
          <button type="button" aria-label="拡大"><i class="plus"></i></button>
          <input type="range" min="0" max="100" value="0" aria-label="価格軸の倍率" />
          <button type="button" aria-label="縮小"><i class="minus"></i></button>
        </div>

        <div class="divider"></div>

        <section class="plot">
          <svg class="layer" viewBox="5 597 1346 114" preserveAspectRatio="none">
            <g shape-rendering="crispEdges">
              <path v-for="t in dmiTicks" :key="t.y" :d="`M5 ${t.y + 0.5}H1351`" class="grid" />
              <path v-for="t in timeTicks" :key="t.line" :d="`M${t.line + 0.5} 597V711`" class="grid" />
            </g>
            <polyline v-for="l in subLines" :key="l.c" :points="l.p" class="curve" :stroke="l.c" :stroke-width="l.w" />
            <path d="M1087.500 597V711" stroke="#b8b8b8" shape-rendering="crispEdges" />
          </svg>
          <div class="legend roomy">
            <button type="button" class="fold" aria-label="DMIの凡例を閉じる">▲</button>
            <button v-for="item in subLegend" :key="item.text" type="button" class="pill"><i :style="{ background: item.color }"></i>{{ item.text }}</button>
          </div>
          <div class="cursor-tag" :style="at(SUB, 1043, 700)">10/04 16:00</div>
        </section>
        <div class="axis"><span v-for="t in dmiTicks" :key="t.label" :style="{ top: pct(t.y, SUB.y, SUB.h) }">{{ t.label }}</span></div>
        <div class="scroller"><button type="button" aria-label="DMIを上へ">▲</button><button type="button" aria-label="DMIを下へ">▼</button></div>
        <div class="zoomer">
          <button type="button" aria-label="DMIを拡大"><i class="plus"></i></button>
          <input type="range" min="0" max="100" value="0" aria-label="DMI軸の倍率" />
          <button type="button" aria-label="DMIを縮小"><i class="minus"></i></button>
        </div>

        <div class="times"><span v-for="t in timeTicks" :key="t.x" :style="{ left: pct(t.x, PLOT.x, PLOT.w) }">{{ t.label }}</span></div>
      </div>

      <div class="navigator">
        <svg class="layer" viewBox="13 733 1331 24" preserveAspectRatio="none">
          <path d="M563.500 733V757" stroke="#aaa" />
          <polyline :points="history" class="curve" stroke="#000" />
        </svg>
        <span v-for="n in navLabels" :key="n.label" class="month" :style="{ left: pct(n.x, NAV.x, NAV.w) }">{{ n.label }}</span>
        <div class="range" :style="{ left: pct(1190, NAV.x, NAV.w), right: pct(NAV.x + 22, NAV.x, NAV.w) }">
          <button type="button" class="grip start" aria-label="表示開始"><svg viewBox="0 0 14 16"><path d="M7 1l5 5q1 1 1 2v5q0 2-2 2H3q-2 0-2-2V8q0-1 1-2z" fill="#f0f0ec" stroke="#888" /><path d="M4.500 8v5M7 8v5M9.500 8v5" stroke="#999" /></svg></button>
          <button type="button" class="grip end" aria-label="表示終了"><svg viewBox="0 0 14 16"><path d="M7 1l5 5q1 1 1 2v5q0 2-2 2H3q-2 0-2-2V8q0-1 1-2z" fill="#f0f0ec" stroke="#888" /><path d="M4.500 8v5M7 8v5M9.500 8v5" stroke="#999" /></svg></button>
        </div>
      </div>
    </main>

    <footer class="tabs">
      <nav>
        <button v-for="tab in tabs" :key="tab.label" type="button" :class="{ current: tab.current, tail: tab.tail }">{{ tab.label }}</button>
      </nav>
      <button type="button" class="add" aria-label="タブを追加"><i class="plus"></i></button>
      <div class="status">アップロード中（0 %）...<span class="spinner"></span></div>
    </footer>
  </div>
</template>

<style>
body {
  margin: 0;
  background: #000;
}
</style>

<style scoped>
.app {
  position: relative;
  display: flex;
  flex-direction: column;
  height: 100vh;
  min-height: 560px;
  overflow: hidden;
  font: 11px/14px "DejaVu Sans", "Noto Sans CJK JP", sans-serif;
  color: #222;
}
button {
  margin: 0;
  padding: 0;
  border: 0;
  font: inherit;
  color: inherit;
  cursor: pointer;
}
.toolbar {
  flex: none;
  box-sizing: border-box;
  height: 38px;
  padding: 4px 2px 0;
  display: flex;
  align-items: flex-start;
  border-bottom: 1px solid #e8e0b0;
  box-shadow: inset 0 -2px #7c6c40;
  background:
    repeating-linear-gradient(45deg, rgba(60, 100, 120, .28) 0 1px, transparent 1px 4px),
    repeating-linear-gradient(-45deg, rgba(0, 0, 0, .35) 0 1px, transparent 1px 4px),
    linear-gradient(#1c3444, #0a1c28 85%, #181408);
}
.group {
  display: flex;
  gap: 1px;
}
.group:not(.right)::after {
  content: "";
  width: 1px;
  height: 27px;
  margin: 0 4px 0 3px;
  background: #6f97ac;
}
.right {
  margin-left: auto;
  gap: 4px;
}
.tool {
  box-sizing: border-box;
  width: 27px;
  height: 28px;
  background: linear-gradient(#777 0, #4a4a4a 30%, #151515 55%, #3c3c3c 80%, #777);
  border: 1px solid #000;
  box-shadow: inset 0 0 0 1px #858585;
}
.tool.active {
  background: linear-gradient(#80304c, #5c1030 40%, #28000c 60%, #a02858);
  box-shadow: inset 0 0 0 1px #d85880;
}
.tool svg {
  display: block;
  width: 27px;
  height: 27px;
  margin: -1px;
}
.titlebar {
  flex: none;
  height: 24px;
  display: flex;
  align-items: center;
  gap: 1px;
  padding: 0 3px 0 10px;
  background: linear-gradient(#8cc4e4, #6cb0d8 40%, #4890bc 65%, #206090);
  color: #fff;
  font: bold 12px/18px "Liberation Sans", "Noto Sans CJK JP", sans-serif;
}
.number {
  width: 17px;
  font: bold 12px/18px "DejaVu Sans", sans-serif;
}
.crumb {
  box-sizing: border-box;
  height: 20px;
  display: flex;
  align-items: center;
  gap: 2px;
  border: 1px solid #22506c;
  background: linear-gradient(#64a0c4, #5490b8 50%, #22648e 52%, #2c749c);
  padding: 0 4px;
}
.pair {
  width: 106px;
  padding-left: 7px;
}
.span {
  width: 66px;
}
.style {
  width: 60px;
  margin-left: 1px;
  padding: 0 2px;
  font-weight: 500;
}
.flag {
  flex: none;
  width: 16px;
  height: 13px;
}
.wide {
  width: 19px;
  margin-right: 2px;
}
.window-buttons {
  margin-left: auto;
  display: flex;
  gap: 3px;
}
.window-buttons button {
  width: 15px;
  height: 15px;
  border-radius: 2px;
  background: linear-gradient(#f4f0e8, #aaa49c);
}
.window-buttons .close {
  background: linear-gradient(#f06858, #b81c18);
}
.window-buttons svg {
  display: block;
  width: 15px;
  height: 15px;
}
.frame {
  flex: 1;
  min-height: 0;
  display: flex;
  flex-direction: column;
  border: solid #20b8e0;
  border-width: 4px 3px 3px;
  padding: 2px 0 2px 2px;
  background: #d4eeee;
  box-shadow: inset 0 2px #a8f0f8, inset 2px 0 #a8f0f8, inset 0 -2px #a8f0f8;
}
.chart {
  flex: 1;
  min-height: 0;
  display: grid;
  grid-template: minmax(0, 527fr) 2px minmax(0, 114fr) 22px / minmax(0, 1fr) 50px 16px 20px;
}
.plot {
  position: relative;
  background: #000;
}
.layer {
  position: absolute;
  inset: 0;
  width: 100%;
  height: 100%;
}
.grid {
  stroke: #303030;
  fill: none;
}
.curve {
  fill: none;
  stroke-linejoin: round;
  vector-effect: non-scaling-stroke;
}
.divider {
  grid-column: 1 / -1;
  background: #d8f0ee;
}
.axis,
.times {
  position: relative;
}
.axis span {
  position: absolute;
  left: 5px;
  transform: translateY(-50%);
}
.times {
  grid-column: 1 / -1;
  margin-right: 86px;
}
.times span {
  position: absolute;
  top: 2px;
  transform: translateX(-50%);
  white-space: nowrap;
}
.scroller {
  display: flex;
  flex-direction: column;
  justify-content: space-between;
  background: linear-gradient(90deg, #c0d8da, #d4eaea);
  border-right: 1px solid #b8d4d4;
}
.scroller button {
  height: 15px;
  border: 1px solid #ccc;
  box-sizing: border-box;
  background: linear-gradient(#fff, #e4e4e4);
  color: #999;
  font-size: 6px;
  line-height: 12px;
}
.zoomer {
  display: flex;
  flex-direction: column;
  align-items: center;
  padding: 1px 0;
}
.zoomer button {
  flex: none;
  box-sizing: border-box;
  width: 15px;
  height: 16px;
  display: grid;
  place-items: center;
  border: 1px solid #888;
  border-radius: 3px;
  background: linear-gradient(#fff, #d8d8d8);
}
.plus,
.minus {
  width: 9px;
  height: 9px;
  background: linear-gradient(#222, #222) center / 9px 3px no-repeat;
}
.plus {
  background: linear-gradient(#222, #222) center / 9px 3px no-repeat, linear-gradient(#222, #222) center / 3px 9px no-repeat;
}
.zoomer input {
  flex: 1;
  min-height: 0;
  width: 15px;
  margin: 9px 0 3px;
  appearance: none;
  writing-mode: vertical-lr;
  direction: rtl;
  background: linear-gradient(90deg, #555 0 1px, #eee 1px 2px, #777 2px 3px) center / 3px 100% no-repeat;
}
.zoomer input::-webkit-slider-thumb {
  appearance: none;
  box-sizing: border-box;
  width: 15px;
  height: 13px;
  border: 1px solid #999;
  border-radius: 7px 3px 3px 7px;
  background:
    linear-gradient(#999 0 1px, transparent 1px 3px, #999 3px 4px, transparent 4px 6px, #999 6px 7px, transparent 7px) 5px 2px / 5px 8px no-repeat,
    #eceeec;
}
.marker {
  position: absolute;
  box-sizing: border-box;
  width: 77px;
  height: 21px;
  margin: -10px 0 0 -38px;
  padding-top: 1px;
  border-radius: 4px;
  background: #b4b4b4;
  color: #282828;
  line-height: 10px;
  text-align: center;
  white-space: nowrap;
}
.marker.down::after,
.marker.up::after {
  content: "";
  position: absolute;
  left: 34px;
  border: solid transparent;
  border-width: 0 5px;
}
.marker.down::after {
  top: 21px;
  border-top: 7px solid #b4b4b4;
}
.marker.up::after {
  bottom: 21px;
  border-bottom: 5px solid #b4b4b4;
}
.legend {
  position: absolute;
  top: 5px;
  left: 25px;
  display: flex;
  gap: 4px;
  white-space: nowrap;
}
.pill {
  box-sizing: border-box;
  height: 18px;
  display: flex;
  align-items: center;
  padding: 0 2px 0 3px;
  border: 1px solid #5858a0;
  border-radius: 6px;
  background: #fff;
  color: #333;
}
.roomy .pill {
  padding: 0 4px;
}
.pill i {
  flex: none;
  width: 6px;
  height: 10px;
  margin-right: 3px;
}
.kana {
  margin-right: 2px;
  font-size: 10px;
  font-feature-settings: "palt";
}
.fold {
  width: 14px;
  height: 18px;
  border-radius: 2px;
  background: linear-gradient(#fff, #c4c4c4);
  color: #222;
  font-size: 7px;
}
.note {
  position: absolute;
  margin: 0;
  color: #fab818;
  font: 20px/22px "Noto Sans", "Noto Sans CJK JP", sans-serif;
  font-feature-settings: "palt";
  white-space: nowrap;
}
.rates {
  position: absolute;
  display: grid;
  font-weight: bold;
  font-size: 10px;
  line-height: 15px;
}
.ask {
  color: #d8281c;
}
.bid {
  color: #2c84c4;
}
.cursor-tag {
  position: absolute;
  transform: translate(-50%, -50%);
  padding: 3px 5px;
  border: 1px solid #777;
  border-radius: 5px;
  background: rgba(85, 85, 85, .9);
  color: #fff;
  font-weight: bold;
  font-size: 10px;
  white-space: nowrap;
}
.panel {
  position: absolute;
  top: 8px;
  left: 7px;
  box-sizing: border-box;
  width: 135px;
  margin: 0;
  border: 2px solid #a4a4a4;
  border-width: 1px 2px 2px;
  border-radius: 4px;
  background: rgba(82, 82, 82, .92);
  color: #fff;
  font-size: 12px;
  line-height: 17px;
}
.row {
  box-sizing: border-box;
  height: 17px;
  display: flex;
  justify-content: space-between;
  padding: 0 4px 0 2px;
  white-space: nowrap;
}
.row dd {
  margin: 0;
}
.heading {
  font-weight: bold;
}
.time {
  font-size: 13px;
  padding-left: 3px;
}
.ruled {
  box-shadow: inset 0 1px #999;
}
.navigator {
  position: relative;
  flex: none;
  height: 24px;
  margin: 0 93px 0 8px;
  background: #fff;
}
.month {
  position: absolute;
  top: 0;
  padding: 0 3px;
  border-radius: 4px;
  background: #858585;
  color: #fff;
  font-size: 13px;
}
.range {
  position: absolute;
  top: 0;
  bottom: 0;
  background: rgba(180, 204, 255, .58);
}
.grip {
  position: absolute;
  bottom: 0;
  width: 14px;
  height: 16px;
  background: none;
}
.grip svg {
  display: block;
}
.start {
  left: -6px;
}
.end {
  right: -7px;
}
.tabs {
  position: relative;
  flex: none;
  height: 21px;
  display: flex;
  background: #222;
  font-size: 12px;
  line-height: 20px;
}
.tabs nav {
  flex: 1;
  min-width: 0;
  display: flex;
  padding-left: 383px;
  overflow: hidden;
}
.tabs nav button {
  flex: 0 0 143px;
  box-sizing: border-box;
  padding: 0 2px;
  border: solid #222;
  border-width: 1px 1px 0 0;
  background: linear-gradient(#c0c0c0, #a8a8a8);
  color: #666;
  font-feature-settings: "palt";
  overflow: hidden;
  white-space: nowrap;
  text-align: center;
}
.tabs nav button:last-child {
  padding-left: 6px;
  text-align: left;
}
.tabs nav .tail {
  text-align: right;
}
.tabs nav .current {
  background: #fff;
  color: #000;
  font-weight: bold;
}
.add {
  flex: none;
  width: 23px;
  display: grid;
  place-items: center;
  background: #c4c4c4;
}
.status {
  position: absolute;
  left: 0;
  bottom: 0;
  box-sizing: border-box;
  width: 478px;
  height: 23px;
  padding-left: 3px;
  border-radius: 0 5px 0 0;
  background: #22222e;
  color: #888;
  line-height: 21px;
  overflow: hidden;
}
.spinner {
  position: absolute;
  left: 14px;
  top: 19px;
  width: 32px;
  height: 32px;
  border-radius: 50%;
  background: #8ca0b8;
}
</style>
